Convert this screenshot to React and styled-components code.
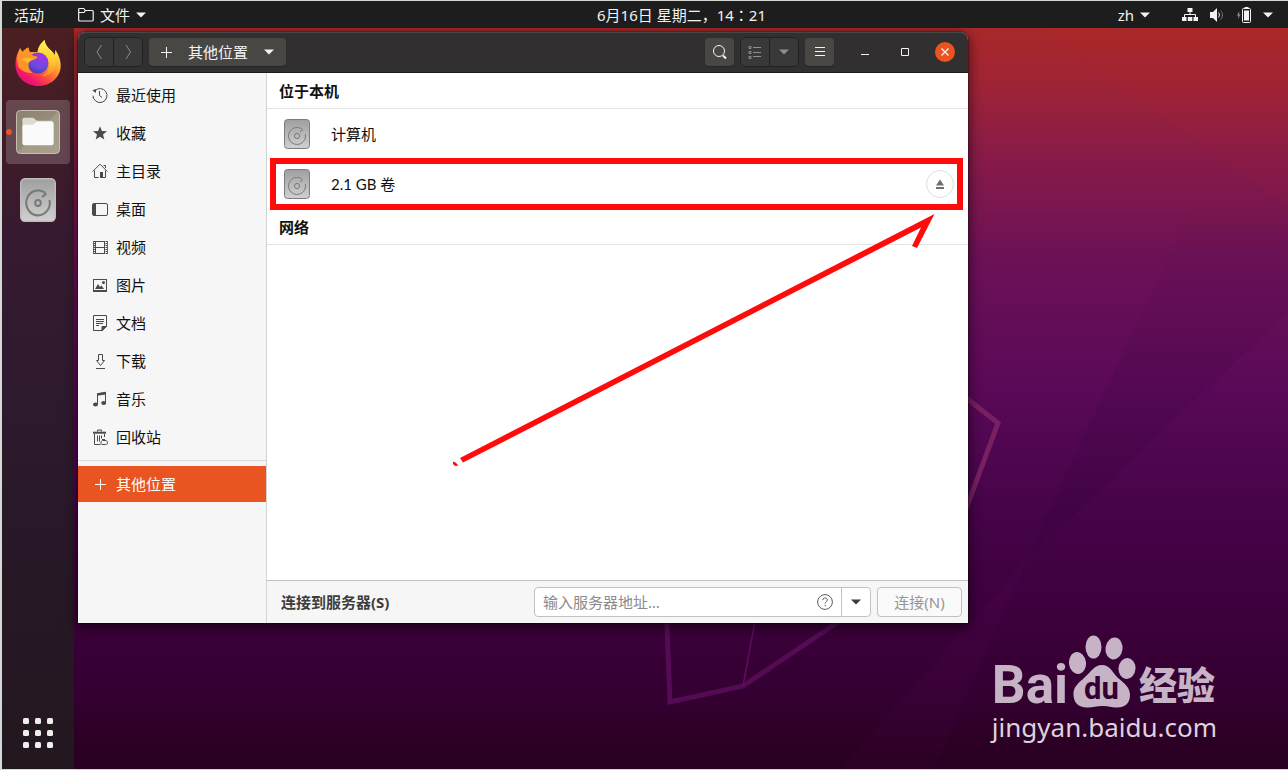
import React from "react";
import styled, { createGlobalStyle, css } from "styled-components";

const GlobalStyle = createGlobalStyle`
  * {
    box-sizing: border-box;
  }
  body {
    margin: 0;
    background: #d5d9d5;
    font-family: "Noto Sans", "Noto Sans CJK SC", sans-serif;
    font-size: 15px;
    line-height: 20px;
  }
  button,
  input {
    font: inherit;
    color: inherit;
    margin: 0;
    padding: 0;
    border: 0;
    background: none;
  }
  ul {
    list-style: none;
    margin: 0;
    padding: 0;
  }
  a {
    color: inherit;
    text-decoration: none;
  }
  svg {
    display: block;
    flex-shrink: 0;
  }
`;

const Screen = styled.div`
  display: flex;
  flex-direction: column;
  min-height: 100vh;
  border: solid #d5d9d5;
  border-width: 1px 0 1px 2px;
`;

/* ---------- top bar ---------- */

const TopBar = styled.header`
  display: grid;
  grid-template-columns: 1fr auto 1fr;
  align-items: center;
  height: 27px;
  padding: 0 15px 0 12px;
  background: #1d1d1d;
  color: #f2f2f2;
`;

const BarGroup = styled.div`
  display: flex;
  align-items: center;
  justify-content: ${({ $end }) => ($end ? "flex-end" : "flex-start")};
  gap: ${({ $end }) => ($end ? "32px" : "34px")};
`;

const BarButton = styled.button`
  display: flex;
  align-items: center;
  gap: ${({ $gap }) => $gap || "6px"};
  white-space: nowrap;
`;

const Clock = styled(BarButton)`
  margin-left: 76px;
  font-family: "Noto Sans", "Noto Sans CJK JP", sans-serif;
`;

/* ---------- desktop ---------- */

const Body = styled.div`
  position: relative;
  display: flex;
  flex: 1;
  overflow: hidden;
`;

const Wallpaper = styled.svg`
  position: absolute;
  inset: 0;
  width: 100%;
  height: 100%;
`;

const Dock = styled.nav`
  position: relative;
  display: flex;
  flex-direction: column;
  gap: 4px;
  width: 72px;
  padding: 4px;
  background: linear-gradient(
    #4c2021,
    #431c26 12%,
    #371a30 28%,
    #2e1a2d 50%,
    #271826 75%,
    #22171f
  );
`;

const DockItem = styled.button`
  position: relative;
  display: grid;
  place-items: center;
  height: 64px;
  border-radius: 4px;
  background: ${({ $active }) =>
    $active ? "rgba(255, 255, 255, 0.19)" : "none"};
  margin-top: ${({ $last }) => ($last ? "auto" : "0")};
`;

const RunningDot = styled.span`
  position: absolute;
  left: 0;
  top: 29px;
  width: 6px;
  height: 6px;
  border-radius: 50%;
  background: #e95420;
`;

const Desktop = styled.main`
  position: relative;
  display: flex;
  flex: 1;
  min-width: 0;
  padding: 4px 320px 146px 4px;
`;

/* ---------- window ---------- */

const Window = styled.section`
  position: relative;
  display: flex;
  flex-direction: column;
  flex: 1;
  min-width: 0;
  border-radius: 8px 8px 0 0;
  background: #ffffff;
  box-shadow: 0 0 1px 1px rgba(0, 0, 0, 0.25), 0 3px 12px 2px rgba(0, 0, 0, 0.5);
`;

const TitleBar = styled.header`
  display: flex;
  align-items: center;
  gap: 6px;
  height: 41px;
  padding: 0 13px 0 6px;
  border-bottom: 1px solid #1c1b1b;
  border-radius: 8px 8px 0 0;
  background: #322f30;
  box-shadow: inset 0 1px #484646;
  color: #f4f4f4;
`;

const raised = css`
  background: #484744;
  box-shadow: 0 1px 1px rgba(0, 0, 0, 0.25);
`;

const flat = css`
  background: #3a393a;
  border: 1px solid #222122;
`;

const ToolButton = styled.button`
  display: grid;
  place-items: center;
  width: 29px;
  height: 28px;
  border-radius: 4px;
  ${raised}
`;

const Split = styled.div`
  display: flex;
  height: 30px;
  border-radius: 5px;
  overflow: hidden;
  ${flat}

  & button {
    display: grid;
    place-items: center;
    width: 28px;
  }
  & button + button {
    width: 29px;
    border-left: 1px solid #222122;
  }
`;

const PathButton = styled.button`
  display: flex;
  align-items: center;
  gap: 14px;
  height: 28px;
  margin-right: auto;
  padding: 0 12px 0 9px;
  border-radius: 4px;
  white-space: nowrap;
  ${raised}

  & span {
    margin-right: 2px;
  }
`;

const WindowControls = styled.div`
  display: flex;
  gap: 20px;
  margin-left: 15px;
`;

const WindowControl = styled.button`
  display: grid;
  place-items: center;
  width: 20px;
  height: 20px;
  border-radius: 50%;
  background: ${({ $close }) => ($close ? "#e95420" : "none")};
`;

const Columns = styled.div`
  display: flex;
  flex: 1;
`;

const Sidebar = styled.nav`
  width: 189px;
  padding-top: 3px;
  border-right: 1px solid #d3d3d3;
  background: #f6f6f6;
  color: #111111;
`;

const Places = styled.ul`
  & + & {
    margin-top: 4px;
    padding-top: 5px;
    border-top: 1px solid #d9d9d9;
  }
`;

const Place = styled.a`
  display: flex;
  align-items: center;
  gap: 8px;
  height: ${({ $selected }) => ($selected ? "36px" : "38px")};
  padding-left: 14px;
  background: ${({ $selected }) => ($selected ? "#e95420" : "none")};
  color: ${({ $selected }) => ($selected ? "#ffffff" : "inherit")};

  & svg {
    color: ${({ $selected }) => ($selected ? "#ffffff" : "#4a4a4a")};
  }
`;

const Content = styled.div`
  display: flex;
  flex-direction: column;
  flex: 1;
  min-width: 0;
  color: #111111;
`;

const GroupTitle = styled.h2`
  display: flex;
  align-items: center;
  height: 36px;
  margin: 0;
  padding: 0 12px;
  border-bottom: 1px solid #e3e3e3;
  font-size: 15px;
  font-weight: 700;
`;

const Volume = styled.li`
  position: relative;
  display: flex;
  align-items: center;
  gap: 21px;
  height: 50px;
  padding: 0 14px 0 17px;
  font-family: Lato, "Noto Sans CJK SC", sans-serif;
`;

const Eject = styled.button`
  display: grid;
  place-items: center;
  width: 28px;
  height: 28px;
  margin-left: auto;
  border: 1px solid #dedede;
  border-radius: 50%;
`;

const Highlight = styled.span`
  position: absolute;
  inset: -1px 5px -1px 3px;
  border: 6px solid #ff0b0b;
  pointer-events: none;
`;

const ServerBar = styled.form`
  display: flex;
  align-items: center;
  gap: 6px;
  height: 43px;
  margin-top: auto;
  padding: 0 6px 0 14px;
  border-top: 1px solid #c1c1c1;
  background: #f6f6f6;

  & label {
    margin-right: auto;
    color: #3d3d3d;
    font-weight: 700;
  }
`;

const AddressField = styled.div`
  display: flex;
  align-items: center;
  width: 337px;
  height: 30px;
  border: 1px solid #c1c1c1;
  border-radius: 4px;
  background: #ffffff;

  & input {
    flex: 1;
    min-width: 0;
    padding-left: 8px;
    outline: none;
  }
  & input::placeholder {
    color: #8b8b8b;
    opacity: 1;
  }
`;

const AddressDrop = styled.button`
  display: grid;
  place-items: center;
  width: 29px;
  height: 28px;
  margin-left: 8px;
  border-left: 1px solid #c1c1c1;
  color: #3a3a3a;
`;

const ConnectButton = styled.button`
  width: 85px;
  height: 30px;
  border: 1px solid #c1c1c1;
  border-radius: 4px;
  background: #fafafa;
  color: #969696;
`;

const Arrow = styled.svg`
  position: absolute;
  top: 178px;
  right: 30px;
  pointer-events: none;
`;

/* ---------- watermark ---------- */

const Watermark = styled.div`
  position: absolute;
  right: 71px;
  bottom: 28px;
  color: #c6b4c6;
`;

const Brand = styled.div`
  display: flex;
  align-items: flex-end;
  height: 76px;
  margin: 0 0 4px;
`;

const BrandLatin = styled.span`
  font-family: Roboto, sans-serif;
  font-size: 53px;
  font-weight: 700;
  line-height: 48px;
`;

const BrandHan = styled.span`
  margin-left: 3px;
  font-family: "Noto Sans CJK SC", sans-serif;
  font-size: 38px;
  font-weight: 900;
  line-height: 52px;
`;

const SiteUrl = styled.div`
  color: #dcd3dc;
  font-size: 26px;
  line-height: 28px;
`;

/* ---------- icons ---------- */

const Icon = ({ size = 16, children, ...rest }) => (
  <svg
    width={size}
    height={size}
    viewBox="0 0 16 16"
    fill="none"
    stroke="currentColor"
    aria-hidden="true"
    {...rest}
  >
    {children}
  </svg>
);

const Caret = ({ color = "currentColor" }) => (
  <svg width="10" height="6" viewBox="0 0 10 6" aria-hidden="true">
    <path d="M0 0.5h10L5 5.5z" fill={color} />
  </svg>
);

const PlusIcon = () => (
  <Icon>
    <path d="M8.5 3v11M3 8.5h11" />
  </Icon>
);

const icons = {
  recent: (
    <Icon>
      <path d="M2.6 4.1A7 7 0 1 1 1 8.7M1.5 11l-.4-1" />
      <path d="M7.5 4v4.5l2.5 2" />
      <path d="M.3 3.2l4-1.3-.6 4z" fill="currentColor" stroke="none" />
    </Icon>
  ),
  starred: (
    <Icon fill="currentColor" stroke="none">
      <path d="M8 1.2l1.9 4.8 5.1.3-4 3.2 1.3 5L8 11.7l-4.3 2.8 1.3-5-4-3.2 5.1-.3z" />
    </Icon>
  ),
  home: (
    <Icon>
      <path d="M.6 8.6L8 1.2l7.4 7.4M2.5 7.5v7h4M13.5 7.5v7h-3M11.5 2.5h2v2.5" />
      <path d="M8 9h3v6H8z" fill="currentColor" stroke="none" />
    </Icon>
  ),
  desktop: (
    <Icon>
      <rect x=".5" y="2.5" width="15" height="12" rx="1.5" />
      <path d="M1 2.5h3v12H1z" fill="currentColor" stroke="none" />
    </Icon>
  ),
  videos: (
    <Icon>
      <path d="M3.5 2v13M12.5 2v13M3 2.5h10M3 8.5h10M3 14.5h10" />
      <path d="M2 2v13M14.5 2v13" strokeDasharray="1 1" strokeWidth="2" />
      <path d="M1.5 2v13M15.5 2v13" strokeWidth=".8" />
    </Icon>
  ),
  pictures: (
    <Icon>
      <rect x="1.5" y="2.5" width="13" height="11" />
      <path d="M1 14h14" strokeWidth="2" />
      <path d="M3 12l3-5 2 3 1.5-1.5L12 12z" fill="currentColor" stroke="none" />
      <circle cx="11.5" cy="5.5" r="1.5" fill="currentColor" stroke="none" />
    </Icon>
  ),
  documents: (
    <Icon>
      <path d="M1.5.5h13v11l-4 4h-9z" />
      <path d="M4 4.5h8M4 6.5h8M4 8.5h7M4 10.5h3" />
      <path d="M10 15.5v-4h4.5z" fill="currentColor" />
    </Icon>
  ),
  downloads: (
    <Icon>
      <path d="M6.5 1.5h4v6h2l-4 5-4-5h2zM4 15.5h9" />
    </Icon>
  ),
  music: (
    <Icon>
      <path d="M5.5 13V3l8-1.5v10" />
      <path d="M5 2.2l9-1.5v2.8L5 4.7z" fill="currentColor" stroke="none" />
      <ellipse cx="3.5" cy="13.5" rx="2.5" ry="2" fill="currentColor" stroke="none" />
      <ellipse cx="11.7" cy="12" rx="2.5" ry="2" fill="currentColor" stroke="none" />
    </Icon>
  ),
  trash: (
    <Icon>
      <path d="M5.5 2.5V1h4v1.5M2.5 5v10.5h6M12.5 5v3M5.5 6.5v6M7.5 6.5v6M9.5 6.5v3" />
      <path d="M1 3.7h13" strokeWidth="2" />
      <path d="M10 10.5h3M10.5 11.5c-2 1-2.500 4 .5 4h2.500c3 0 2.500-3 .5-4z" />
    </Icon>
  ),
};

const DriveIcon = ({ width, height, id, bold }) => (
  <svg width={width} height={height} viewBox="0 0 26 30" preserveAspectRatio="none" aria-hidden="true">
    <defs>
      <linearGradient id={id} x1="0" y1="0" x2="0" y2="1">
        <stop offset="0" stopColor="#9f9f9f" />
        <stop offset="1" stopColor="#d0d0d0" />
      </linearGradient>
    </defs>
    <rect
      x=".5"
      y=".5"
      width="25"
      height="29"
      rx="3"
      fill={`url(#${id})`}
      stroke={bold ? "#bdbdbd" : "#7c7c7c"}
    />
    <g fill="none" stroke="#7a7a7a" strokeWidth={bold ? 1.5 : 1}>
      <path d="M18.2 10.2A8.5 8.5 0 1 0 21.3 15M19 10.5l-3 2.5" />
      <circle cx="13" cy="17" r={bold ? 2 : 2.6} />
    </g>
  </svg>
);

const FirefoxIcon = () => (
  <svg width="48" height="48" viewBox="0 1 48 48" aria-hidden="true">
    <defs>
      <linearGradient id="fx-body" x1="0.85" y1="0.1" x2="0.2" y2="0.95">
        <stop offset="0" stopColor="#fff44f" />
        <stop offset="0.35" stopColor="#ffa62b" />
        <stop offset="0.6" stopColor="#ff5a36" />
        <stop offset="0.85" stopColor="#f5156c" />
        <stop offset="1" stopColor="#e01070" />
      </linearGradient>
      <linearGradient id="fx-flame" x1="0.5" y1="0" x2="0.5" y2="1">
        <stop offset="0" stopColor="#fff35a" />
        <stop offset="0.6" stopColor="#ffc62e" />
        <stop offset="1" stopColor="#ff8a2c" />
      </linearGradient>
      <radialGradient id="fx-globe" cx="0.65" cy="0.2" r="0.9">
        <stop offset="0" stopColor="#a334e6" />
        <stop offset="0.6" stopColor="#6a4be0" />
        <stop offset="1" stopColor="#4639a8" />
      </radialGradient>
    </defs>
    <path
      d="M1.5 26C1.4 20 2.6 16 4 13.5L6 9.3l2.5 3.7c1.5-2 3.5-3.5 6-4.5.2 2 .5 3.5 1.5 4.5h7.5C24 8 27 4 30.5 1c.5 4 3 7.5 6.5 10.5 2 1.5 3 3 3.8 4.5l.5-5c3 4 5.4 10 5.4 15.5C46.7 38 37 47 24.3 47S1.7 38 1.5 26z"
      fill="url(#fx-body)"
    />
    <path
      d="M23.5 13C24 8 27 4 30.5 1c.5 4 3 7.5 6.5 10.5 5 5 6.5 12 3.5 18-3 5.5-8 8-13 7.5 6-2 8.5-8 7-13-1.5-5-6-9-11-11z"
      fill="url(#fx-flame)"
    />
    <circle cx="24" cy="24" r="10.5" fill="url(#fx-globe)" />
    <path
      d="M4 14l2-4.7L8.5 13c1.5-2 3.5-3.5 6-4.5.2 2.5 1 4.5 2.5 6.5 1 1.3 3 2.3 6.5 2.5-.3 1.8-2 2.8-4.5 3.5-3.5 1-4.5 2.5-4.5 5.5 0 3 1.5 5.5 4 7.5-6 0-11-2-14-6-1.5-5-2-10-.5-14z"
      fill="#ff9526"
    />
    <path d="M7.5 20c4-2 9-1.5 12 0-2 .8-4 1.5-5 4-2.5-2-5-1-7-4z" fill="#ffb833" />
  </svg>
);

const FilesIcon = () => (
  <svg width="44" height="44" viewBox="0 0 45 45" aria-hidden="true">
    <defs>
      <linearGradient id="files-bg" x1="0" y1="0" x2="1" y2="1">
        <stop offset="0" stopColor="#8a826e" />
        <stop offset="0.48" stopColor="#958d79" />
        <stop offset="0.52" stopColor="#a39b87" />
        <stop offset="1" stopColor="#a8a08d" />
      </linearGradient>
    </defs>
    <rect x=".5" y=".5" width="44" height="44" rx="4" fill="url(#files-bg)" stroke="#c9c3b4" />
    <path d="M6.5 12V10a2 2 0 0 1 2-2H17c2 0 3 3 5 3h14a2 2 0 0 1 2 2v10h-31z" fill="#dedad2" />
    <path
      d="M6.5 17a2 2 0 0 1 2-2H17c2 0 3-3 5-3h14.5a2 2 0 0 1 2 2v20a2 2 0 0 1-2 2h-28a2 2 0 0 1-2-2z"
      fill="#fafafa"
    />
  </svg>
);

const GridIcon = () => (
  <svg width="30" height="30" viewBox="0 0 30 30" fill="#eeeeec" aria-hidden="true">
    {[0, 12, 24].map((y) =>
      [0, 12, 24].map((x) => (
        <rect key={`${x}-${y}`} x={x} y={y} width="6" height="6" rx="1.5" />
      ))
    )}
  </svg>
);

const PawIcon = () => (
  <svg width="68" height="74" viewBox="0 0 68 74" fill="currentColor" role="img" aria-label="du">
    <ellipse cx="9.5" cy="28" rx="8.5" ry="11" transform="rotate(-6 9.5 28)" />
    <ellipse cx="25.5" cy="12" rx="8" ry="11.5" />
    <ellipse cx="46" cy="13.5" rx="8.5" ry="11" transform="rotate(8 46 13.5)" />
    <ellipse cx="59" cy="33.5" rx="8.5" ry="10.5" transform="rotate(4 59 33.5)" />
    <path d="M34 30c8 0 10 7 16 13 6 5 12 9 12 17 0 9-6 13-14 12.500-5-.3-9-2-14-1.500-6 0-10 2-15 1.500C10 72 6 68 5.500 60 5 51 11 48 17 42c6-5 9-12 17-12z" />
    <text
      x="33.5"
      y="64"
      textAnchor="middle"
      fontFamily="Roboto, sans-serif"
      fontSize="31"
      fontWeight="700"
      fill="#340033"
    >
      du
    </text>
  </svg>
);

const places = [
  ["recent", "最近使用"],
  ["starred", "收藏"],
  ["home", "主目录"],
  ["desktop", "桌面"],
  ["videos", "视频"],
  ["pictures", "图片"],
  ["documents", "文档"],
  ["downloads", "下载"],
  ["music", "音乐"],
  ["trash", "回收站"],
];

const DesktopWallpaper = () => (
  <Wallpaper viewBox="2 28 1286 741" preserveAspectRatio="none" aria-hidden="true">
    <defs>
      <linearGradient id="sky" x1="0" y1="0" x2="0" y2="1">
        <stop offset="0" stopColor="#a92829" />
        <stop offset="0.07" stopColor="#a02435" />
        <stop offset="0.16" stopColor="#8b1c46" />
        <stop offset="0.31" stopColor="#6c1157" />
        <stop offset="0.48" stopColor="#5b0958" />
        <stop offset="0.64" stopColor="#47044a" />
        <stop offset="0.8" stopColor="#3c003b" />
        <stop offset="0.91" stopColor="#330030" />
        <stop offset="1" stopColor="#28001f" />
      </linearGradient>
      <linearGradient id="facet-dark" x1="0" y1="0" x2="0" y2="1">
        <stop offset="0" stopColor="#30003a" stopOpacity="0" />
        <stop offset="1" stopColor="#30003a" stopOpacity="0.25" />
      </linearGradient>
      <linearGradient id="facet-light" x1="0" y1="0" x2="0" y2="1">
        <stop offset="0" stopColor="#6a0a68" stopOpacity="0.12" />
        <stop offset="1" stopColor="#6a0a68" stopOpacity="0.05" />
      </linearGradient>
    </defs>
    <rect x="2" y="28" width="1286" height="741" fill="url(#sky)" />
    <path d="M1040 28h248v180z" fill="#d03a20" opacity="0.04" />
    <path d="M1026 560l168-360h94v112z" fill="url(#facet-dark)" />
    <path d="M1026 560L840 769h94l92-209z" fill="url(#facet-light)" />
    <g fill="none" stroke="#5d0e5c" strokeWidth="5">
      <path d="M666 600l4 102 73-16 110-74" opacity="0.8" />
      <path d="M757 610l-14 76" strokeWidth="1.5" />
      <path d="M960 393l38 30-32 86" stroke="#782062" />
    </g>
  </Wallpaper>
);

const FileWindow = () => (
  <Window aria-label="其他位置">
    <TitleBar>
      <Split>
        <button aria-label="后退">
          <Icon stroke="#8e8e8e">
            <path d="M10.5 1L6 8l4.5 7" />
          </Icon>
        </button>
        <button aria-label="前进">
          <Icon stroke="#8e8e8e">
            <path d="M6 1l4.5 7L6 15" />
          </Icon>
        </button>
      </Split>
      <PathButton>
        <PlusIcon />
        <span>其他位置</span>
        <Caret />
      </PathButton>
      <ToolButton aria-label="搜索">
        <Icon>
          <circle cx="7" cy="7" r="5.5" />
          <path d="M11 11.5l3 3" strokeWidth="2" />
        </Icon>
      </ToolButton>
      <Split>
        <button aria-label="列表视图">
          <Icon stroke="#8e8e8e">
            <path d="M6 3.5h8M6 8.5h8M6 12.5h8" />
            <path d="M2 2.5h2v2H2zM2 7.5h2v2H2zM2 12.5h2v2H2z" />
          </Icon>
        </button>
        <button aria-label="视图选项">
          <Caret color="#8e8e8e" />
        </button>
      </Split>
      <ToolButton aria-label="菜单">
        <Icon>
          <path d="M3 3.5h10M3 7.5h10M3 11.5h10" />
        </Icon>
      </ToolButton>
      <WindowControls>
        <WindowControl aria-label="最小化">
          <Icon>
            <path d="M4 10.5h8" />
          </Icon>
        </WindowControl>
        <WindowControl aria-label="最大化">
          <Icon>
            <path d="M4.5 4.5h7v7h-7z" />
          </Icon>
        </WindowControl>
        <WindowControl aria-label="关闭" $close>
          <Icon>
            <path d="M4.5 4.5l7 7M11.5 4.5l-7 7" strokeWidth="1.3" />
          </Icon>
        </WindowControl>
      </WindowControls>
    </TitleBar>

    <Columns>
      <Sidebar aria-label="位置">
        <Places>
          {places.map(([icon, label]) => (
            <li key={icon}>
              <Place href={`#${icon}`}>
                {icons[icon]}
                {label}
              </Place>
            </li>
          ))}
        </Places>
        <Places>
          <li>
            <Place href="#other" $selected aria-current="page">
              <PlusIcon />
              其他位置
            </Place>
          </li>
        </Places>
      </Sidebar>

      <Content>
        <GroupTitle>位于本机</GroupTitle>
        <ul>
          <Volume>
            <DriveIcon width={26} height={30} id="drive-computer" />
            计算机
          </Volume>
          <Volume>
            <DriveIcon width={26} height={30} id="drive-volume" />
            2.1 GB 卷
            <Eject aria-label="弹出">
              <Icon fill="#6e6e6e" stroke="none">
                <path d="M8 3.5l4 6H4zM4 11h8v2H4z" />
              </Icon>
            </Eject>
            <Highlight />
          </Volume>
        </ul>
        <GroupTitle>网络</GroupTitle>
        <ServerBar>
          <label htmlFor="server">连接到服务器(S)</label>
          <AddressField>
            <input id="server" type="text" placeholder="输入服务器地址…" />
            <button type="button" aria-label="帮助">
              <Icon stroke="#5c5c5c">
                <circle cx="8" cy="8" r="7.4" />
                <path d="M5.8 6.2C5.8 3.2 10.3 3.2 10.3 6c0 1.6-2.2 1.8-2.2 3.7M8.1 11v1.3" />
              </Icon>
            </button>
            <AddressDrop type="button" aria-label="最近的服务器">
              <Caret />
            </AddressDrop>
          </AddressField>
          <ConnectButton type="button" disabled>
            连接(N)
          </ConnectButton>
        </ServerBar>
      </Content>
    </Columns>

    <Arrow width="490" height="260" viewBox="448 210 490 260" fill="#ff0b0b" aria-hidden="true">
      <path d="M460 458L934.5 214 917 248l-5-2 9-18.5L463 462.5z" />
      <path d="M453 461.5l2.5 1 3 3-3.5.5-2-2z" />
    </Arrow>
  </Window>
);

const App = () => {
  return (
    <>
      <GlobalStyle />
      <Screen>
        <TopBar>
          <BarGroup>
            <BarButton>活动</BarButton>
            <BarButton>
              <Icon>
                <path
                  d="M.7 13V2.5a1 1 0 0 1 1-1h4l1.5 2h7a1 1 0 0 1 1 1V13a1 1 0 0 1-1 1H1.7a1 1 0 0 1-1-1zM1 5.5h5l1.5-2"
                  strokeWidth="1.2"
                />
              </Icon>
              文件
              <Caret />
            </BarButton>
          </BarGroup>
          <Clock>6月16日 星期二，14：21</Clock>
          <BarGroup $end>
            <BarButton>
              zh
              <Caret />
            </BarButton>
            <BarButton $gap="11px" aria-label="系统菜单">
              <Icon fill="currentColor">
                <path d="M5.5 1h5v4h-5zM0 10h4.5v4H0zM5.8 10h4.5v4H5.8zM11.5 10H16v4h-4.5z" stroke="none" />
                <path d="M8 5v3M2.5 10V7.5h11V10" fill="none" />
              </Icon>
              <Icon>
                <path d="M1 5h3l4-4v14l-4-4H1z" fill="currentColor" stroke="none" />
                <path d="M9.5 5.5c1.2 1.5 1.2 3.5 0 5" />
                <path d="M11.5 3.5c2.6 2.5 2.6 6.5 0 9" stroke="#777777" />
              </Icon>
              <Icon>
                <path d="M3.5 4L1 8.5h1.5L2 12l2.5-4.5H3z" fill="#999999" stroke="none" />
                <rect x="6.5" y="1.5" width="8" height="14" rx="1" />
                <path d="M8 3.5h5v10H8zM8.5 0h4v1.5h-4z" fill="currentColor" stroke="none" />
              </Icon>
              <Caret />
            </BarButton>
          </BarGroup>
        </TopBar>

        <Body>
          <DesktopWallpaper />
          <Dock aria-label="应用">
            <DockItem aria-label="Firefox">
              <FirefoxIcon />
            </DockItem>
            <DockItem aria-label="文件" $active>
              <RunningDot />
              <FilesIcon />
            </DockItem>
            <DockItem aria-label="磁盘">
              <DriveIcon width={36} height={44} id="drive-dock" bold />
            </DockItem>
            <DockItem aria-label="显示应用程序" $last>
              <GridIcon />
            </DockItem>
          </Dock>
          <Desktop>
            <FileWindow />
            <Watermark>
              <Brand>
                <BrandLatin>Bai</BrandLatin>
                <PawIcon />
                <BrandHan>经验</BrandHan>
              </Brand>
              <SiteUrl>jingyan.baidu.com</SiteUrl>
            </Watermark>
          </Desktop>
        </Body>
      </Screen>
    </>
  );
};

export default App;
